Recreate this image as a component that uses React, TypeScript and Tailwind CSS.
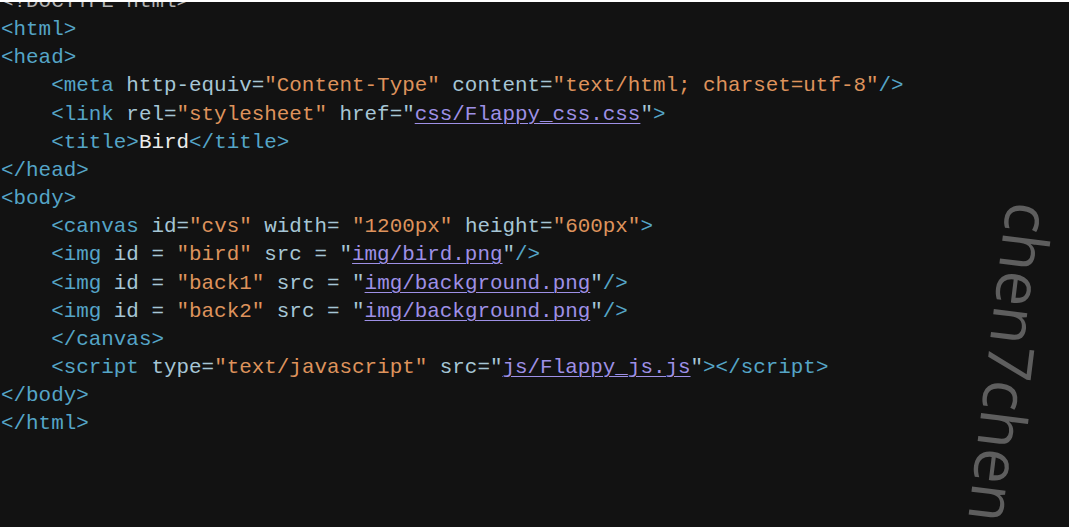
type Kind = "d" | "t" | "a" | "s" | "l" | "w";
type Token = [Kind, string];

const colors: Record<Kind, string> = {
  d: "text-[#b4b4b4]",
  t: "text-[#55a5c7]",
  a: "text-[#a6c6d6]",
  s: "text-[#de935c]",
  l: "text-[#9e90e6] underline decoration-1 underline-offset-[3px]",
  w: "text-[#ececec]",
};

const pad = "    ";

const lines: Token[][] = [
  [["d", "<!DOCTYPE html>"]],
  [["t", "<html>"]],
  [["t", "<head>"]],
  [
    ["t", pad + "<meta"],
    ["a", " http-equiv="],
    ["s", '"Content-Type"'],
    ["a", " content="],
    ["s", '"text/html; charset=utf-8"'],
    ["t", "/>"],
  ],
  [
    ["t", pad + "<link"],
    ["a", " rel="],
    ["s", '"stylesheet"'],
    ["a", " href="],
    ["a", '"'],
    ["l", "css/Flappy_css.css"],
    ["a", '"'],
    ["t", ">"],
  ],
  [
    ["t", pad + "<title>"],
    ["w", "Bird"],
    ["t", "</title>"],
  ],
  [["t", "</head>"]],
  [["t", "<body>"]],
  [
    ["t", pad + "<canvas"],
    ["a", " id="],
    ["s", '"cvs"'],
    ["a", " width= "],
    ["s", '"1200px"'],
    ["a", " height="],
    ["s", '"600px"'],
    ["t", ">"],
  ],
  [
    ["t", pad + "<img"],
    ["a", " id = "],
    ["s", '"bird"'],
    ["a", " src = "],
    ["a", '"'],
    ["l", "img/bird.png"],
    ["a", '"'],
    ["t", "/>"],
  ],
  [
    ["t", pad + "<img"],
    ["a", " id = "],
    ["s", '"back1"'],
    ["a", " src = "],
    ["a", '"'],
    ["l", "img/background.png"],
    ["a", '"'],
    ["t", "/>"],
  ],
  [
    ["t", pad + "<img"],
    ["a", " id = "],
    ["s", '"back2"'],
    ["a", " src = "],
    ["a", '"'],
    ["l", "img/background.png"],
    ["a", '"'],
    ["t", "/>"],
  ],
  [["t", pad + "</canvas>"]],
  [
    ["t", pad + "<script"],
    ["a", " type="],
    ["s", '"text/javascript"'],
    ["a", " src="],
    ["a", '"'],
    ["l", "js/Flappy_js.js"],
    ["a", '"'],
    ["t", "></script>"],
  ],
  [["t", "</body>"]],
  [["t", "</html>"]],
];

const App = () => {
  return (
    <div className="relative flex h-[527px] w-full flex-col overflow-hidden bg-white">
      <div className="h-[2px] shrink-0 bg-white" />
      <div className="flex-1 overflow-hidden bg-[#121212]">
        <pre className="-mt-[14px] pl-[1px] font-['Liberation_Mono',monospace] text-[20.9px] leading-[28.15px] whitespace-pre">
          {lines.map((line, i) => (
            <div key={i}>
              {line.map(([kind, text], j) => (
                <span key={j} className={colors[kind]}>
                  {text}
                </span>
              ))}
            </div>
          ))}
        </pre>
      </div>
      {/* watermark */}
      <span className="absolute left-[1012px] top-[363px] -translate-x-1/2 -translate-y-1/2 rotate-[97deg] font-['Open_Sans',sans-serif] text-[63px] leading-none whitespace-nowrap text-[#5e5e5e]">
        chen7chen
      </span>
    </div>
  );
};

export default App;
